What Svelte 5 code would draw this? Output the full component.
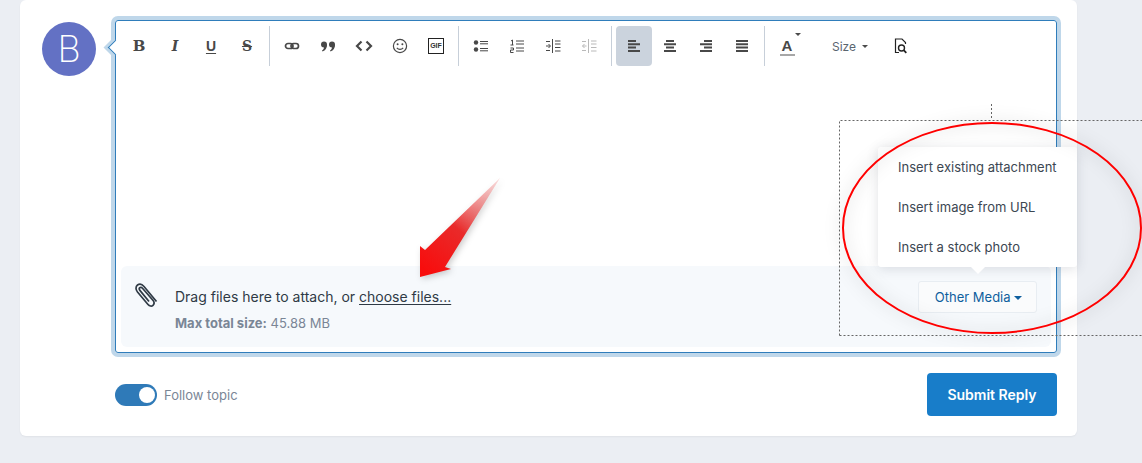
<script>
  // each toolbar entry is one 36px button, 'sep' draws the divider
  const alignIcon = (rows) => rows.map((r, i) => `M${r[0]} ${3 + i * 3.3}H${r[1]}`).join('')

  const tools = [
    { text: 'B', cls: 'bold' },
    { text: 'I', cls: 'italic' },
    { text: 'U', cls: 'under' },
    { text: 'S', cls: 'strike' },
    'sep',
    { name: 'link' },
    { name: 'quote' },
    { name: 'code' },
    { name: 'smile' },
    { name: 'gif' },
    'sep',
    { name: 'ul' },
    { name: 'ol' },
    { name: 'indent' },
    { name: 'outdent', off: true },
    'sep',
    { active: true, d: alignIcon([[2, 10], [2, 14], [2, 10], [2, 14]]) },
    { d: alignIcon([[4, 12], [2, 14], [4, 12], [2, 14]]) },
    { d: alignIcon([[6, 14], [2, 14], [6, 14], [2, 14]]) },
    { d: alignIcon([[2, 14], [2, 14], [2, 14], [2, 14]]) },
    'sep',
    { name: 'color' },
    { name: 'size' },
    { name: 'preview' }
  ]

  const mediaItems = ['Insert existing attachment', 'Insert image from URL', 'Insert a stock photo']
  let follow = $state(true)
</script>

<div class="page">
  <div class="card">
    <div class="reply">
      <div class="avatar">B</div>
      <div class="editor">
        <span class="nub"></span>
        <div class="toolbar">
          {#each tools as t}
            {#if t === 'sep'}
              <span class="sep"></span>
            {:else if t.name === 'size'}
              <button class="tool size">Size <i class="caret"></i></button>
            {:else}
              <button class="tool {t.cls || ''}" class:active={t.active} class:off={t.off}>
                {#if t.text}
                  {t.text}
                {:else if t.d}
                  <svg width="16" height="16" viewBox="0 0 16 16"><path d={t.d} stroke="currentColor" stroke-width="2" fill="none" /></svg>
                {:else if t.name === 'link'}
                  <svg width="16" height="16" viewBox="0 0 16 16" fill="none" stroke="currentColor" stroke-width="1.700">
                    <rect x="1.500" y="5.500" width="7.500" height="5" rx="2.500" />
                    <rect x="7" y="5.500" width="7.500" height="5" rx="2.500" />
                  </svg>
                {:else if t.name === 'quote'}
                  <svg width="16" height="16" viewBox="0 0 16 16" fill="currentColor">
                    <circle cx="4" cy="6.500" r="3" /><path d="M7 6.500C7 10 5.500 12.500 2.500 13.500L2 12.500C3.500 11.500 4 10.500 4 9z" />
                    <circle cx="12" cy="6.500" r="3" /><path d="M15 6.500C15 10 13.500 12.500 10.500 13.500L10 12.500C11.500 11.500 12 10.500 12 9z" />
                  </svg>
                {:else if t.name === 'code'}
                  <svg width="18" height="16" viewBox="0 0 18 16" fill="none" stroke="currentColor" stroke-width="2.200">
                    <path d="M6.500 3.500L2 8l4.500 4.500M11.500 3.500L16 8l-4.500 4.500" />
                  </svg>
                {:else if t.name === 'smile'}
                  <svg width="16" height="16" viewBox="0 0 16 16" fill="none" stroke="currentColor" stroke-width="1.200">
                    <circle cx="8" cy="8" r="6.600" />
                    <circle cx="5.600" cy="6.300" r="1" fill="currentColor" stroke="none" />
                    <circle cx="10.400" cy="6.300" r="1" fill="currentColor" stroke="none" />
                    <path d="M4.800 9.800c1.700 2 4.700 2 6.400 0" />
                  </svg>
                {:else if t.name === 'gif'}
                  <span class="gif">GIF</span>
                {:else if t.name === 'ul'}
                  <svg width="16" height="16" viewBox="0 0 16 16">
                    <circle cx="3" cy="4.500" r="2.200" fill="currentColor" /><circle cx="3" cy="11.500" r="2.200" fill="currentColor" />
                    <path d="M7 3.500h8M7 5.800h8M7 10.500h8M7 12.800h8" stroke="currentColor" stroke-width="1" />
                  </svg>
                {:else if t.name === 'ol'}
                  <svg width="16" height="16" viewBox="0 0 16 16" fill="none" stroke="currentColor">
                    <path d="M2 3l1.500-1v5M1.500 7h3M1.500 10h3v2h-3v2.500h3" stroke-width="1" />
                    <path d="M7 3h8M7 6h8M7 10h8M7 13h8" stroke-width="1" />
                  </svg>
                {:else if t.name === 'indent' || t.name === 'outdent'}
                  <svg width="16" height="16" viewBox="0 0 16 16" fill="none" stroke="currentColor" stroke-width="1">
                    <path d="M7.500 1v14M10 3h5.500M10 6h5.500M10 9.500h5.500M10 13h5.500M1 3.500h4M1 12.500h4" />
                    <path d={t.name === 'indent' ? 'M1 8h4M3.500 6l2 2-2 2' : 'M1.500 8h4M3.500 6l-2 2 2 2'} />
                  </svg>
                {:else if t.name === 'color'}
                  <span class="color"><b>A</b><i class="bar"></i></span><i class="caret up"></i>
                {:else if t.name === 'preview'}
                  <svg width="16" height="16" viewBox="0 0 16 16" fill="none" stroke="#222" stroke-width="1.200">
                    <path d="M6 14.500H2.500V1h6.500l3.500 3.500V6" />
                    <circle cx="8.500" cy="10" r="3" stroke-width="1.400" /><path d="M10.700 12.200l2.600 2.600" stroke-width="1.800" />
                  </svg>
                {/if}
              </button>
            {/if}
          {/each}
        </div>
        <div class="content"></div>
        <div class="attach">
          <svg class="clip" width="28" height="28" viewBox="0 0 28 28" fill="none" stroke="#2f3a45" stroke-width="1.700">
            <path d="M23.500 21.500L11 6.500C9 4 6.500 3.500 4.500 5S2.500 9.500 4.500 12L15 24.500c1.500 1.800 3.700 2 5 .8s1.400-3.200-.1-5L9.500 8.300c-.8-1-2-1.200-2.700-.6s-.7 1.700.1 2.700L16 21.500" transform="translate(0 -1)" />
          </svg>
          <div class="attach-text">
            <div class="drag">Drag files here to attach, or <a href="#top">choose files...</a></div>
            <div class="limit"><b>Max total size:</b> 45.88 MB</div>
          </div>
          <div class="media">
            <div class="popup">
              {#each mediaItems as item}
                <div class="popup-item">{item}</div>
              {/each}
              <span class="popup-arrow"></span>
            </div>
            <button class="media-btn">Other Media <i class="caret blue"></i></button>
          </div>
        </div>
      </div>
    </div>
    <div class="footer">
      <label class="follow">
        <input type="checkbox" bind:checked={follow} />
        <span class="switch"><span class="knob"></span></span>
        Follow topic
      </label>
      <button class="submit">Submit Reply</button>
    </div>
  </div>

  <!-- annotation drawn on top of the screenshot -->
  <svg class="marks" width="1142" height="463" viewBox="0 0 1142 463">
    <defs>
      <linearGradient id="arrowfill" gradientUnits="userSpaceOnUse" x1="425" y1="270" x2="500" y2="180">
        <stop offset="0" stop-color="#f80d0d" />
        <stop offset="0.45" stop-color="#e92a2a" />
        <stop offset="1" stop-color="#f3b5b5" stop-opacity="0.5" />
      </linearGradient>
    </defs>
    <path class="dash" d="M839.500 335.500V120.500H1142M839.500 335.500H1142M991.500 104V120" />
    <ellipse class="ring" cx="992" cy="228" rx="149" ry="105" />
    <polygon class="arrow" points="420,277 420,246 425,250 500,178 445,267 451,269" fill="url(#arrowfill)" />
  </svg>
</div>

<style>
  :global(body) {
    margin: 0;
    background: #ebeef3;
    font-family: Inter, "Liberation Sans", sans-serif;
  }
  .page {
    position: relative;
    width: 1142px;
    height: 463px;
    overflow: hidden;
  }
  .card {
    margin-left: 20px;
    width: 1057px;
    height: 436px;
    box-sizing: border-box;
    padding: 20px 20px 20px 22px;
    background: #fff;
    border-radius: 6px;
    box-shadow: 0 1px 2px rgba(0, 0, 0, 0.05);
  }
  .reply {
    display: flex;
    align-items: flex-start;
    gap: 19px;
  }
  .avatar {
    flex: none;
    width: 54px;
    height: 54px;
    margin-top: 2px;
    border-radius: 50%;
    background: #6371c4;
    color: #fff;
    font-size: 36px;
    font-weight: 200;
    line-height: 54px;
    text-align: center;
  }
  .editor {
    position: relative;
    flex: 1;
    height: 333px;
    box-sizing: border-box;
    display: flex;
    flex-direction: column;
    border: 1px solid #2f7dbb;
    border-radius: 3px;
    box-shadow: 0 0 0 4px #bfd7ea;
  }
  .nub {
    position: absolute;
    left: -6px;
    top: 21px;
    width: 10px;
    height: 10px;
    background: #fff;
    border-left: 1px solid #2f7dbb;
    border-bottom: 1px solid #2f7dbb;
    box-shadow: -3px 3px 0 #bfd7ea;
    transform: rotate(45deg);
  }
  .toolbar {
    display: flex;
    align-items: center;
    height: 40px;
    margin-top: 5px;
    padding-left: 5px;
    flex: none;
  }
  .tool {
    position: relative;
    display: flex;
    align-items: center;
    justify-content: center;
    width: 36px;
    height: 40px;
    padding: 0;
    border: 0;
    border-radius: 4px;
    background: none;
    color: #484848;
    font: 14px "DejaVu Serif", serif;
  }
  .tool.active {
    background: #cbd3dd;
  }
  .tool.off {
    color: #b9b9b9;
  }
  .sep {
    flex: none;
    width: 1px;
    height: 40px;
    margin: 0 -0.5px;
    background: #c7cfd9;
    position: relative;
  }
  .sep + .tool {
    margin-left: 4.500px;
  }
  .tool:has(+ .sep) {
    margin-right: 4.500px;
  }
  .bold {
    font-weight: 700;
    font-size: 15px;
  }
  .italic {
    font-weight: 700;
    font-style: italic;
  }
  .under {
    font: 700 14px "Liberation Sans", sans-serif;
    text-decoration: underline;
    text-underline-offset: 2px;
  }
  .strike {
    font-weight: 700;
    text-decoration: line-through;
  }
  .gif {
    display: block;
    width: 14px;
    height: 14px;
    border: 1px solid #222;
    color: #333;
    font: 700 7px/14px "Liberation Sans", sans-serif;
    text-align: center;
  }
  .color {
    display: flex;
    flex-direction: column;
    align-items: center;
    font: 700 15px/15px "Liberation Sans", sans-serif;
    margin-top: 2px;
  }
  .color b {
    font-weight: 700;
  }
  .bar {
    display: block;
    width: 15px;
    height: 2px;
    margin-top: 1px;
    background: #a7a7a7;
  }
  .caret {
    display: inline-block;
    width: 0;
    height: 0;
    border: 3px solid transparent;
    border-top: 3px solid #4b4b4b;
    border-bottom: 0;
  }
  .caret.up {
    position: absolute;
    right: 4px;
    top: 7px;
  }
  .size {
    font: 12px Inter, sans-serif;
    color: #5a6570;
    width: 78px;
    box-sizing: border-box;
    padding-left: 12px;
    gap: 6px;
  }
  .content {
    flex: 1;
  }
  .attach {
    flex: none;
    display: flex;
    align-items: flex-start;
    height: 81px;
    margin: 0 5px 5px;
    box-sizing: border-box;
    padding: 15px 14px 0 12px;
    border-radius: 6px;
    background: #f6f9fc;
  }
  .clip {
    flex: none;
    margin-right: 14px;
  }
  .attach-text {
    flex: 1;
    padding-top: 7px;
  }
  .drag {
    font-size: 14px;
    line-height: 18px;
    color: #2f3a45;
  }
  .drag a {
    color: #2f3a45;
    text-decoration: underline;
    text-underline-offset: 2px;
  }
  .limit {
    margin-top: 9px;
    font-size: 13px;
    line-height: 16px;
    color: #7a8696;
  }
  .limit b {
    font-weight: 700;
  }
  .media {
    position: relative;
    flex: none;
  }
  .media-btn {
    width: 119px;
    height: 32px;
    padding: 0 0 0 2px;
    border: 1px solid #e8edf2;
    border-radius: 3px;
    background: #fafbfc;
    color: #0f5f9e;
    font: 13px Inter, sans-serif;
  }
  .caret.blue {
    vertical-align: 2px;
    border-width: 4px;
    border-bottom: 0;
    border-top-color: #0f5f9e;
  }
  .popup {
    position: absolute;
    left: -40px;
    bottom: 46px;
    z-index: 2;
    width: 199px;
    height: 120px;
    border-radius: 3px;
    background: #fff;
    box-shadow: 0 2px 12px rgba(60, 70, 85, 0.16);
  }
  .popup-item {
    height: 40px;
    padding-left: 20px;
    color: #3c4752;
    font-size: 13px;
    line-height: 40px;
    white-space: nowrap;
  }
  .popup-arrow {
    position: absolute;
    left: 93px;
    bottom: -7px;
    width: 0;
    height: 0;
    border: 7px solid transparent;
    border-top: 7px solid #fff;
    border-bottom: 0;
  }
  .footer {
    display: flex;
    align-items: center;
    justify-content: space-between;
    height: 43px;
    margin-top: 20px;
    padding-left: 73px;
  }
  .follow {
    display: flex;
    align-items: center;
    gap: 7px;
    color: #7a8696;
    font-size: 13px;
  }
  .follow input {
    display: none;
  }
  .switch {
    display: block;
    width: 42px;
    height: 22px;
    border-radius: 11px;
    background: #2f7ab8;
    position: relative;
  }
  .knob {
    position: absolute;
    right: 2px;
    top: 3px;
    width: 16px;
    height: 16px;
    border-radius: 50%;
    background: #fff;
  }
  .submit {
    width: 130px;
    height: 43px;
    border: 0;
    border-radius: 4px;
    background: #187dc9;
    color: #fff;
    font: 600 14px Inter, sans-serif;
  }
  .marks {
    position: absolute;
    left: 0;
    top: 0;
    z-index: 5;
    pointer-events: none;
  }
  .dash {
    fill: none;
    stroke: #666;
    stroke-width: 1;
    stroke-dasharray: 2 2;
  }
  .ring {
    fill: none;
    stroke: #f00;
    stroke-width: 2;
    filter: drop-shadow(0 0 8px rgba(0, 0, 0, 0.3));
  }
  .arrow {
    filter: drop-shadow(2px 2px 3px rgba(0, 0, 0, 0.2));
  }
</style>
